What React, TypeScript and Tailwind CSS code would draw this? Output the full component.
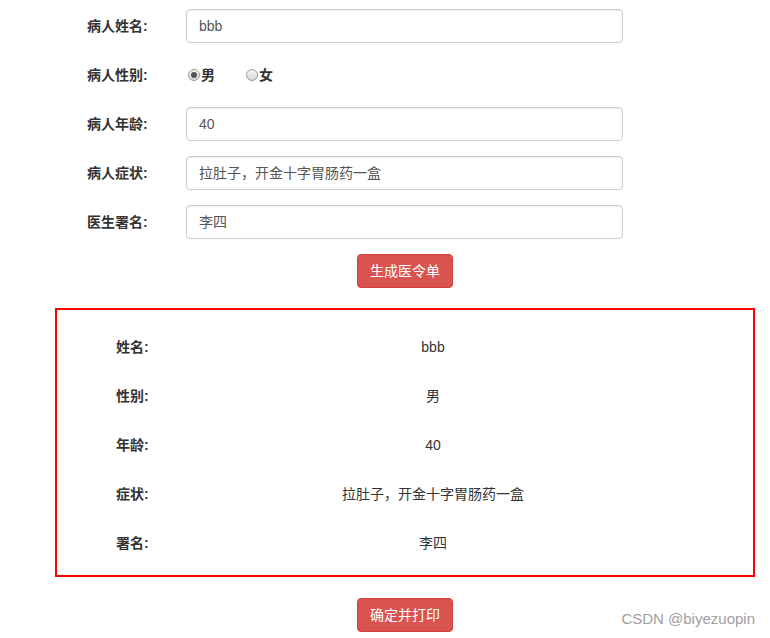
import React from 'react';

const font = { fontFamily: '"Liberation Sans", "Noto Sans CJK SC", sans-serif' };

const fields = [
  { label: '病人姓名:', value: 'bbb' },
  { label: '病人年龄:', value: '40' },
  { label: '病人症状:', value: '拉肚子，开金十字胃肠药一盒' },
  { label: '医生署名:', value: '李四' },
];

const summary = [
  { label: '姓名:', value: 'bbb' },
  { label: '性别:', value: '男' },
  { label: '年龄:', value: '40' },
  { label: '症状:', value: '拉肚子，开金十字胃肠药一盒' },
  { label: '署名:', value: '李四' },
];

const Radio = ({ checked, text }: { checked?: boolean; text: string }) => (
  <label className="flex items-center text-[14px] font-bold text-[#333]">
    <span className="flex h-[12px] w-[12px] items-center justify-center rounded-full border border-[#9a9a9a] bg-gradient-to-b from-[#f4f4f4] to-[#d8d8d8]">
      {checked && <span className="h-[6px] w-[6px] rounded-full bg-[#555]" />}
    </span>
    <span className="ml-[1px]">{text}</span>
  </label>
);

const Row = ({ label, children }: { label: string; children: React.ReactNode }) => (
  <div className="mb-[15px] flex h-[34px] items-center">
    <div className="w-[99px] text-[14px] font-bold text-[#333]">{label}</div>
    {children}
  </div>
);

const Input = ({ value }: { value: string }) => (
  <div className="flex h-[34px] w-[437px] items-center rounded-[4px] border border-[#ccc] bg-white px-[12px] text-[14px] text-[#555] shadow-[inset_0_1px_1px_rgba(0,0,0,0.075)]">
    {value}
  </div>
);

const Button = ({ text }: { text: string }) => (
  <button className="flex h-[34px] w-[96px] items-center justify-center rounded-[4px] border border-[#d43f3a] bg-[#d9534f] text-[14px] text-white">
    {text}
  </button>
);

export default function App() {
  return (
    <div className="relative h-[638px] w-[770px] overflow-hidden bg-white" style={font}>
      <div className="pl-[87px] pt-[9px]">
        <Row label={fields[0].label}>
          <Input value={fields[0].value} />
        </Row>
        <Row label="病人性别:">
          <div className="flex items-center gap-[31px] pl-[2px]">
            <Radio checked text="男" />
            <Radio text="女" />
          </div>
        </Row>
        {fields.slice(1).map((f) => (
          <Row key={f.label} label={f.label}>
            <Input value={f.value} />
          </Row>
        ))}
      </div>

      <div className="flex justify-center pl-[40px]">
        <Button text="生成医令单" />
      </div>

      <div className="ml-[55px] mt-[20px] w-[700px] border-2 border-[#ff0000] pb-[22px] pl-[59px] pt-[27px]">
        <div className="flex flex-col gap-[29px]">
          {summary.map((s) => (
            <div key={s.label} className="flex h-[20px] items-center text-[14px] text-[#333]">
              <div className="w-[100px] font-bold">{s.label}</div>
              <div className="w-[434px] text-center">{s.value}</div>
            </div>
          ))}
        </div>
      </div>

      <div className="mt-[21px] flex justify-center pl-[40px]">
        <Button text="确定并打印" />
      </div>

      <div className="absolute bottom-[8px] right-[15px] text-[15px] text-[#a0a0a0]">CSDN @biyezuopin</div>
    </div>
  );
}
